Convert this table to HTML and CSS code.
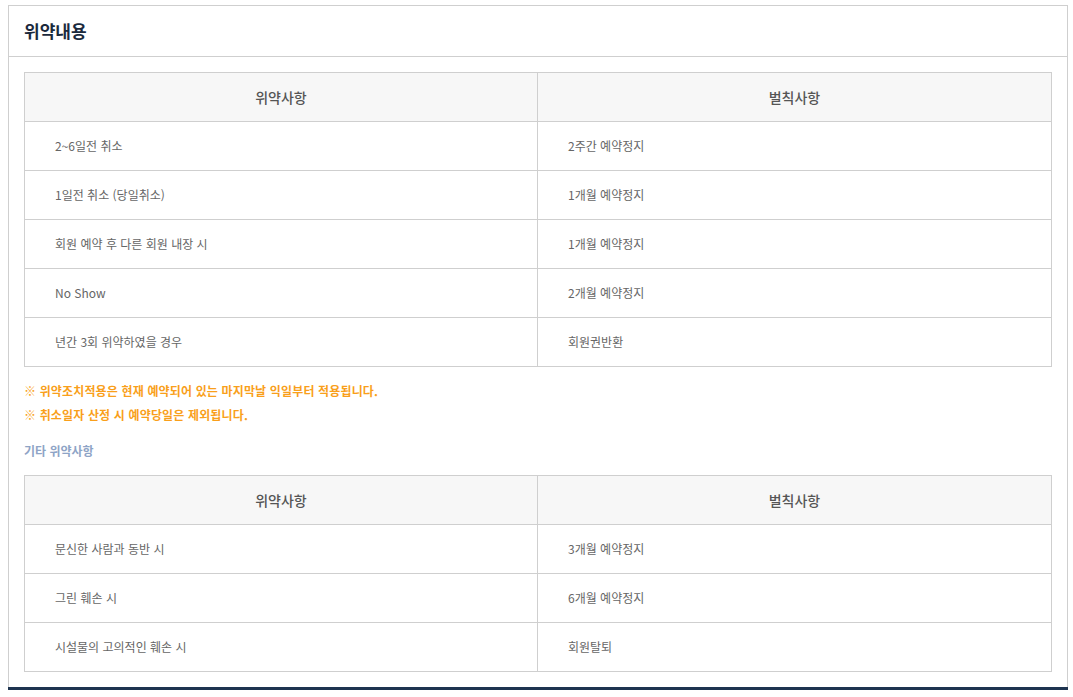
FILE: index.html
```html
<!DOCTYPE html>
<html lang="ko">
<head>
<meta charset="utf-8">
<link rel="stylesheet" href="styles.css">
</head>
<body>
<div class="page">
  <section class="panel">
    <header class="panel-head">
      <h2 class="panel-title">위약내용</h2>
    </header>
    <div class="panel-body">
      <table class="rule-table">
        <thead>
          <tr><th>위약사항</th><th>벌칙사항</th></tr>
        </thead>
        <tbody>
          <tr><td>2~6일전 취소</td><td>2주간 예약정지</td></tr>
          <tr><td>1일전 취소 (당일취소)</td><td>1개월 예약정지</td></tr>
          <tr><td>회원 예약 후 다른 회원 내장 시</td><td>1개월 예약정지</td></tr>
          <tr><td>No Show</td><td>2개월 예약정지</td></tr>
          <tr><td>년간 3회 위약하였을 경우</td><td>회원권반환</td></tr>
        </tbody>
      </table>
      <ul class="notes">
        <li>※ 위약조치적용은 현재 예약되어 있는 마지막날 익일부터 적용됩니다.</li>
        <li>※ 취소일자 산정 시 예약당일은 제외됩니다.</li>
      </ul>
      <h3 class="sub-title">기타 위약사항</h3>
      <table class="rule-table">
        <thead>
          <tr><th>위약사항</th><th>벌칙사항</th></tr>
        </thead>
        <tbody>
          <tr><td>문신한 사람과 동반 시</td><td>3개월 예약정지</td></tr>
          <tr><td>그린 훼손 시</td><td>6개월 예약정지</td></tr>
          <tr><td>시설물의 고의적인 훼손 시</td><td>회원탈퇴</td></tr>
        </tbody>
      </table>
    </div>
  </section>
  <div class="footer-bar"></div>
</div>
</body>
</html>
```
FILE: styles.css
```css
* { box-sizing: border-box; }
html, body { margin: 0; padding: 0; background: #fff; }
body {
  font-family: "Noto Sans CJK KR", "Noto Sans", sans-serif;
  color: #666;
}
.page {
  padding: 5px 5px 0 8px;
  width: 1073px;
}
.panel {
  border: 1px solid #cfcfcf;
  border-bottom: none;
  width: 1060px;
}
.panel-head {
  height: 51px;
  border-bottom: 1px solid #cfcfcf;
  display: flex;
  align-items: center;
  padding: 0 15px;
}
.panel-title {
  margin: 0;
  font-size: 17px;
  font-weight: 700;
  color: #1b2a3d;
  line-height: 24px;
}
.panel-body {
  padding: 15px;
}
.rule-table {
  width: 100%;
  border-collapse: collapse;
  table-layout: fixed;
  border: 1px solid #cfcfcf;
}
.rule-table th,
.rule-table td {
  border: 1px solid #cfcfcf;
  height: 49px;
  padding: 0 30px;
  vertical-align: middle;
}
.rule-table th:first-child,
.rule-table td:first-child {
  width: 513px;
}
.rule-table th {
  background: #f7f7f7;
  font-size: 14px;
  font-weight: 500;
  color: #555;
  text-align: center;
  padding-bottom: 1px;
}
.rule-table td {
  font-size: 12px;
  color: #666;
  text-align: left;
  padding-bottom: 2px;
}
.notes {
  list-style: none;
  margin: 12px 0 0;
  padding: 0;
}
.notes li {
  font-size: 12px;
  line-height: 24px;
  font-weight: 700;
  color: #f99f1b;
  letter-spacing: 0.15px;
}
.sub-title {
  margin: 12px 0;
  font-size: 12px;
  line-height: 24px;
  font-weight: 700;
  color: #8ea4c6;
}
.footer-bar {
  width: 1060px;
  height: 3px;
  background: #1e3450;
}
```
